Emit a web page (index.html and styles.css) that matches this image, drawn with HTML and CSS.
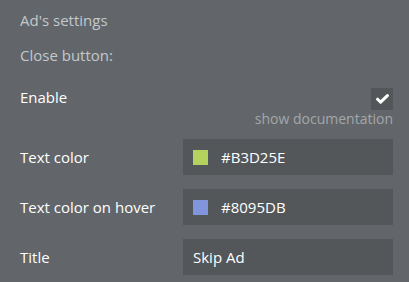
FILE: index.html
```html
<!DOCTYPE html>
<html>
<head>
<meta charset="utf-8">
<link rel="stylesheet" href="styles.css">
</head>
<body>
<div class="panel">
  <div class="heading">Ad's settings</div>
  <div class="subheading">Close button:</div>
  <div class="row-enable">
    <span class="label">Enable</span>
    <span class="checkbox">
      <svg width="13" height="10" viewBox="0 0 13 10"><path d="M1.6 5.2 L4.6 8.2 L11.4 1.6" fill="none" stroke="#ffffff" stroke-width="3" stroke-linecap="round" stroke-linejoin="round"/></svg>
    </span>
  </div>
  <div class="doc-link">show documentation</div>
  <div class="fields">
    <div class="label">Text color</div>
    <div class="input"><span class="swatch swatch-green"></span><span>#B3D25E</span></div>
    <div class="label">Text color on hover</div>
    <div class="input"><span class="swatch swatch-blue"></span><span>#8095DB</span></div>
    <div class="label">Title</div>
    <div class="input"><span>Skip Ad</span></div>
  </div>
</div>
</body>
</html>
```
FILE: styles.css
```css
html, body {
  margin: 0;
  padding: 0;
  background: #62666a;
  width: 409px;
  height: 282px;
  overflow: hidden;
}
body {
  font-family: "Open Sans", "Noto Sans", sans-serif;
  font-size: 15px;
  color: #ffffff;
}
.panel {
  padding: 10px 16px 0 20px;
}
.heading {
  line-height: 20px;
  color: #c3c8cc;
}
.subheading {
  margin-top: 15px;
  line-height: 20px;
  color: #c3c8cc;
}
.row-enable {
  margin-top: 22px;
  display: flex;
  justify-content: space-between;
  align-items: flex-start;
}
.label {
  line-height: 20px;
  color: #ffffff;
}
.checkbox {
  margin-top: 1px;
  width: 22px;
  height: 22px;
  background: #53575a;
  display: flex;
  align-items: center;
  justify-content: center;
}
.doc-link {
  text-align: right;
  font-size: 14px;
  line-height: 18px;
  color: #a3a7aa;
}
.fields {
  margin-top: 11px;
  display: grid;
  grid-template-columns: 163px 210px;
  grid-auto-rows: 36px;
  row-gap: 14px;
  align-items: center;
}
.input {
  height: 36px;
  background: #53575a;
  display: flex;
  align-items: center;
  padding-left: 10px;
  gap: 13px;
  color: #ffffff;
}
.swatch {
  width: 15px;
  height: 15px;
}
.swatch-green { background: #b3d25e; }
.swatch-blue { background: #8095db; }
```
